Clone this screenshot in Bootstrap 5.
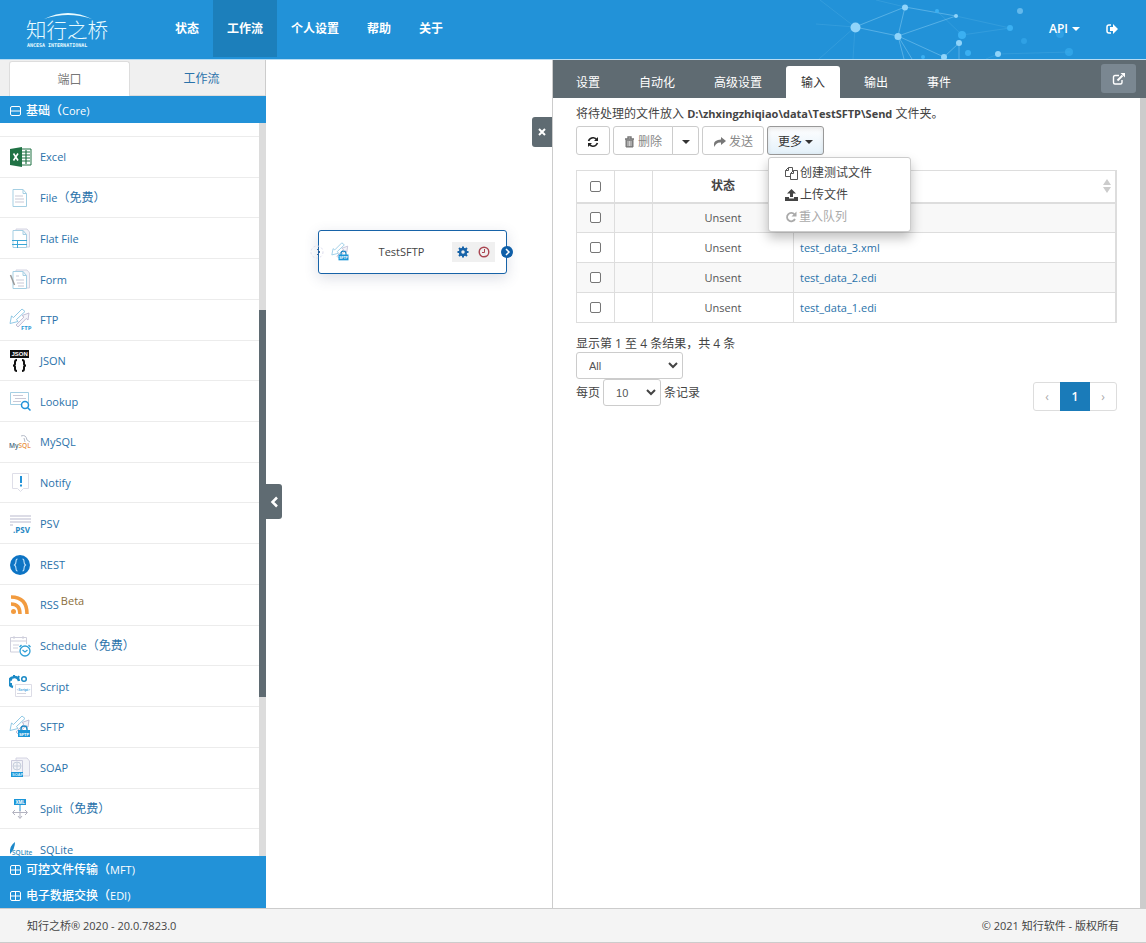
<!DOCTYPE html>
<html lang="zh-CN">
<head>
<meta charset="utf-8">
<meta name="viewport" content="width=device-width, initial-scale=1">
<title>知行之桥</title>
<link href="https://cdn.jsdelivr.net/npm/bootstrap@5.3.0/dist/css/bootstrap.min.css" rel="stylesheet">
<style>
:root{--brand:#2292d8;--brand-dark:#1c7fbb;--slate:#5f6b72;--ink:#444;--lnk:#2a72aa}
body{font-family:"Open Sans","Noto Sans CJK SC",sans-serif;font-size:12px;line-height:20px;color:var(--ink);background:#fff}
a{color:var(--lnk);text-decoration:none}
svg{flex:none}
.en{font-size:11px}
.topbar{background:var(--brand);height:60px;border-bottom:1px solid #b7dcf3}
.topbar .net{right:0;top:0}
.topbar .navbar-nav .nav-link{color:#fff;font-weight:600;padding:0 14px;height:57px;line-height:57px}
.topbar .navbar-nav .nav-link.active{background:var(--brand-dark);color:#fff}
.brandbox{width:161px;padding-left:25px}
.side{width:266px}
.side-tabs{background:#f0f0f0;height:36px;padding:1px 0 0 9px;border-right:1px solid #ccc}
.side-tabs .nav-link{border:0;border-radius:3px 3px 0 0;padding:0;height:35px;line-height:35px;color:var(--lnk);border-bottom:1px solid #ddd}
.side-tabs .nav-link.active{background:#fff;color:#777;border:1px solid #ddd;border-bottom:0}
.side-tabs li:first-child{width:121px}
.group-head{background:var(--brand);color:#fff;border:0;height:26px;padding:2px 10px 0;font-weight:500;text-align:left}
.group-head.first{height:27px;padding-top:3px}
.ports{display:grid;grid-auto-rows:1fr;height:100%;margin:13px 0 0}
.ports a{border-top:1px solid #ececec;padding:1px 0 0 9px;gap:7px;font-size:11px}
.ports a span{font-size:12px;margin-left:-7px}
.ports svg{width:24px;height:24px}
.ports sup{color:#8a6d3b;font-size:11px;top:-4px;margin-left:-5px}
.track{width:7px;background:#dcdcdc}
.thumb{background:var(--slate)}
.canvas{min-width:0}
.collapser{left:0;top:50%;width:16px;height:35px;background:var(--slate);border:0;border-radius:0 3px 3px 0}
.closer{right:0;top:57px;width:20px;height:30px;background:var(--slate);border:0;border-radius:3px 0 0 3px}
.node{left:52px;top:170px;width:189px;height:44px;border:1px solid #1763a8;border-radius:3px;background:#fff;box-shadow:0 4px 14px rgba(60,70,110,.18);padding:0 11px 0 12px}
.node .tools{background:#f0f0f0;height:20px;width:43px}
.port-in{left:-9px;top:14px}
.port-out{right:-7px;top:15px}
.panel{width:594px;border-left:1px solid #ccc}
.panel-tabs{background:var(--slate);height:38px;padding:6px 10px 0 8px;gap:9px;border-bottom:0}
.panel-tabs .nav-link{border:0;color:#fff;padding:0 15px;height:32px;line-height:33px;border-radius:3px 3px 0 0}
.panel-tabs .nav-link.active{background:#fff;color:#333}
.popout{width:35px;height:29px;background:#7a8791;border:0;border-radius:3px;margin-top:-2px}
.content{padding:6px 23px 0 23px}
.rail{width:6px;background:#ccc}
.tools-row{gap:3px;margin-top:2px}
.btn-tool{--bs-btn-color:#333;--bs-btn-bg:#fff;--bs-btn-border-color:#ccc;--bs-btn-disabled-color:#888;--bs-btn-disabled-border-color:#ccc;--bs-btn-disabled-opacity:1;height:29px;font-size:12px;line-height:20px;padding:2px 10px 0;border-radius:3px;display:inline-flex;align-items:center;gap:3px}
.btn-tool.open{border-color:#999;background:linear-gradient(#fff,#e4f1fa);box-shadow:inset 0 2px 4px rgba(0,0,0,.1)}
.btn-split{width:27px}
.caret{display:inline-block;border:4px solid transparent;border-top-color:currentColor;border-bottom:0}
.more-menu{--bs-dropdown-min-width:143px;top:100%;left:1px;margin-top:2px;padding:4px 0 3px;font-size:12px;border-radius:3px;border-color:#ccc;box-shadow:0 6px 12px rgba(0,0,0,.25)}
.more-menu .dropdown-item{display:flex;align-items:center;gap:2px;padding:0 16px;height:22px;color:#444}
.more-menu .dropdown-item:disabled{color:#aaa}
.files{--bs-table-color:#555;--bs-table-striped-bg:#f8f8f8;--bs-table-striped-color:#555;table-layout:fixed;margin:15px 0 13px;border:1px solid #ddd;border-right:2px solid #ddd}
.files td,.files th{padding:0 6px;height:30px;vertical-align:middle;border-color:#ddd}
.files td{font-size:11px}
.files thead th{height:32px;border-bottom:2px solid #ddd;color:#444}
.files .form-check-input,.files .form-check-input:checked{width:11px;height:11px;margin:0;border:1px solid #767676;border-radius:2px;display:block;margin:auto}
.sorter{margin-right:-2px}
.w-tick{width:38px}.w-state{width:141px}
.count{line-height:16px}
.pick{width:107px;height:27px;font:11px/15px "Liberation Sans",sans-serif;color:#555;padding:2px 20px 0 12px;border:1px solid #ccc;border-radius:3px;background-image:url("data:image/svg+xml,%3Csvg xmlns='http://www.w3.org/2000/svg' viewBox='0 0 10 7'%3E%3Cpath d='M1 1l4 4 4-4' fill='none' stroke='%23444' stroke-width='2'/%3E%3C/svg%3E");background-size:10px 7px;background-position:right 4px center}
.pick-sm{width:58px}
.per-page{gap:3px}
.pager .page-link{width:28px;height:29px;padding:0;line-height:27px;text-align:center;font-size:12px;color:#aaa;border-color:#ddd}
.pager .page-item:first-child .page-link{border-radius:3px 0 0 3px}
.pager .page-item:last-child .page-link{border-radius:0 3px 3px 0}
.pager .page-item.active .page-link{width:30px;background:#1a7bb9;border-color:#1a7bb9;color:#fff;font-weight:600}
.pager{margin-top:-24px}
.foot{background:#f4f4f4;border-top:1px solid #ccc;border-bottom:1px solid #ccc;height:35px;padding:0 27px;font-size:11px}
</style>
</head>
<body class="vh-100 d-flex flex-column overflow-hidden">
<svg width="0" height="0" class="position-absolute" aria-hidden="true">
<defs>
<symbol id="i-arrows" viewBox="0 0 24 24"><g fill="#fff" stroke-linejoin="round" stroke-width=".9"><path stroke="#bbb8d0" fill="#f4f4f9" d="m7 17 8-8-2-1.500 7-2.500-1 7-1.800-1.500L9 19z"/><path stroke="#85c3e2" d="m13 1 3 2.500-8.500 8L9 13.500l-8 2L2.500 8 4.500 9.500z"/></g></symbol>
<symbol id="i-sftp" viewBox="0 0 24 24"><use href="#i-arrows"/><path d="M12 16v-2a3 3 0 0 1 6 0v2" fill="none" stroke="#1c87c5" stroke-width="1.4"/><path d="M9 15h12v7H9z" fill="#1b96d8"/><text x="10" y="20.500" font-size="4" font-weight="700" fill="#fff" font-family="Liberation Sans">SFTP</text></symbol>
<symbol id="i-page" viewBox="0 0 24 24"><path d="M4 3.500h10l3.500 4v13H4zM14 3.500v4h3.500" fill="#fff" stroke="#a5cfe3"/></symbol>
<symbol id="i-back" viewBox="0 0 24 24"><path d="M7 2h11l2.500 3v15H7z" fill="#f3f3f8" stroke="#d4d4e2"/></symbol>
</defs>
</svg>

<header class="topbar navbar navbar-expand p-0 position-relative flex-shrink-0 align-items-start">
<svg class="net position-absolute" width="330" height="59" viewBox="816 0 330 59" aria-hidden="true">
<g stroke="#8fd0f5" stroke-width=".8" fill="none"><path opacity=".6" d="M855 27 905 7l-7 29zM898 36l58-20-51-9M898 36l46 21 15-14v16M898 36l6 23M898 36l14 23"/><path opacity=".2" d="M855 27 820 0M855 27l-39-3M855 27l-36 32M855 27l-2 32M905 7 876 0M956 16l54 12-48 7-25-24M998 54l72-2M998 54l-12 5"/></g>
<g fill="#90d4fa"><circle cx="855.500" cy="27.500" r="5"/><circle cx="905" cy="7.500" r="3"/><circle cx="898" cy="36.500" r="3.500"/><circle cx="956" cy="16" r="2"/><circle cx="959" cy="43" r="3"/><circle cx="944" cy="57" r="3"/><circle cx="998" cy="54" r="3"/><circle cx="1020" cy="11" r="3" opacity=".6"/></g>
<g fill="#3bb0f2"><circle cx="962" cy="35" r="4"/><circle cx="968" cy="53" r="3"/><circle cx="1010" cy="28" r="3"/><circle cx="1024" cy="41" r="3" opacity=".5"/><circle cx="1069" cy="52" r="4" opacity=".6"/><circle cx="1060" cy="34" r="4" opacity=".5"/><circle cx="937" cy="11" r="2"/><circle cx="923" cy="57" r="2"/></g>
</svg>
<a class="brandbox" href="#" aria-label="知行之桥">
<svg width="86" height="59" viewBox="0 0 86 59" fill="#e9fbff"><path d="M19 19q24-12 48 0-24-8-48 0z"/><text x="1" y="38" font-size="20.500" font-weight="300" font-family="Noto Sans CJK SC">知行之桥</text><text x="2" y="47" font-size="5" font-weight="700" font-family="DejaVu Sans Mono">ANCESA INTERNATIONAL</text></svg></a>
<ul class="navbar-nav me-auto">
<li class="nav-item"><a class="nav-link" href="#">状态</a></li>
<li class="nav-item"><a class="nav-link active" href="#">工作流</a></li>
<li class="nav-item"><a class="nav-link" href="#">个人设置</a></li>
<li class="nav-item"><a class="nav-link" href="#">帮助</a></li>
<li class="nav-item"><a class="nav-link" href="#">关于</a></li>
</ul>
<ul class="navbar-nav position-relative me-3">
<li class="nav-item"><a class="nav-link d-flex align-items-center gap-1" href="#">API <span class="caret"></span></a></li>
<li class="nav-item"><a class="nav-link d-flex align-items-center px-2 mx-1" href="#" aria-label="退出"><svg width="12" height="12" viewBox="0 0 12 12"><path d="M5 2H3Q1 2 1 4v4q0 2 2 2h2" fill="none" stroke="#fff" stroke-width="1.500"/><path d="M4 4h3V1l5 5-5 5V8H4z" fill="#fff"/></svg></a></li>
</ul>
</header>

<main class="d-flex flex-fill overflow-hidden">
<aside class="side d-flex flex-column flex-shrink-0">
<ul class="nav side-tabs flex-nowrap">
<li class="nav-item text-center"><a class="nav-link active" href="#">端口</a></li>
<li class="nav-item text-center flex-fill"><a class="nav-link ps-2" href="#">工作流</a></li>
</ul>
<button class="group-head first d-flex align-items-center gap-1" type="button"><svg width="12" height="12" viewBox="0 0 12 12" fill="none" stroke="#fff"><rect x=".5" y="1.500" width="10" height="9" rx="1.500"/><path d="M1 6h10"/></svg><span>基础（<span class="en">Core)</span></span></button>
<div class="d-flex flex-fill overflow-hidden">
<nav class="flex-fill overflow-hidden h-100"><div class="ports">
<a class="d-flex align-items-center" href="#"><svg viewBox="0 0 24 24"><path d="M12 4h10v16H12z" fill="#fff" stroke="#207245"/><path d="M13 7h8M13 10h8M13 13h8M13 16h8M17 5v14" stroke="#207245" stroke-width="1.200"/><path d="M1 4l12-2v20L1 20z" fill="#207245"/><path d="m4.500 8.500 4.500 7M9 8.500l-4.500 7" stroke="#fff" stroke-width="1.600"/></svg>Excel</a>
<a class="d-flex align-items-center" href="#"><svg viewBox="0 0 24 24"><use href="#i-page"/><path d="M6 10h8M6 13h9M6 16h9" stroke="#c9c9d6"/></svg>File<span>（免费）</span></a>
<a class="d-flex align-items-center" href="#"><svg viewBox="0 0 24 24"><use href="#i-back"/><use href="#i-page"/><path d="M3 13.500h15M3 17.500h15M8.500 13v8" stroke="#3ba6d6"/></svg>Flat File</a>
<a class="d-flex align-items-center" href="#"><svg viewBox="0 0 24 24"><use href="#i-back"/><use href="#i-page"/><path d="M7 8h3M7 12h8M8 15h7M9 18h6" stroke="#c9c9d6"/><path d="m1.500 7 4 10" stroke="#999" stroke-width="1.500"/></svg>Form</a>
<a class="d-flex align-items-center" href="#"><svg viewBox="0 0 24 24"><use href="#i-arrows"/><text x="12" y="22" font-size="6" font-weight="700" fill="#2d9bd6" font-family="Open Sans">FTP</text></svg>FTP</a>
<a class="d-flex align-items-center" href="#"><svg viewBox="0 0 24 24"><path d="M1 1h19v8H1z" fill="#111"/><text x="2.500" y="7.200" font-size="6" font-weight="700" fill="#fff" font-family="Liberation Sans">JSON</text><path d="M8 11q-2 0-2 2v2q0 1.500-2 1.500 2 0 2 1.500v2q0 2 2 2M13 11q2 0 2 2v2q0 1.500 2 1.500-2 0-2 1.500v2q0 2-2 2" fill="none" stroke="#111" stroke-width="2"/></svg>JSON</a>
<a class="d-flex align-items-center" href="#"><svg viewBox="0 0 24 24"><path d="M1.500 2.500h18v12h-18z" fill="#fff" stroke="#a5cfe3"/><path d="M4 5.500h10M6 8.500h11M4 11.500h8" stroke="#c9c9d6"/><circle cx="16" cy="15" r="3.500" fill="#fff" stroke="#2292d8" stroke-width="1.500"/><path d="m18.500 17.500 3 3" stroke="#2292d8" stroke-width="1.500"/></svg>Lookup</a>
<a class="d-flex align-items-center" href="#"><svg viewBox="0 0 24 24"><path d="M12 6q5-2 6 4l3 2M15 8l1 4" fill="none" stroke="#b5bcc9"/><text x="0" y="18" font-size="6.500" font-weight="600" fill="#44657c" font-family="Open Sans">My<tspan fill="#e99145">SQL</tspan></text></svg>MySQL</a>
<a class="d-flex align-items-center" href="#"><svg viewBox="0 0 24 24"><path d="M3.500 2.500h16v15h-5l-3 3-3-3h-5z" fill="#fff" stroke="#dedee8"/><path d="M12 5v7M12 13.500v2" stroke="#2292d8" stroke-width="2"/></svg>Notify</a>
<a class="d-flex align-items-center" href="#"><svg viewBox="0 0 24 24"><path d="M1 4h21M1 7h21M1 10h21M1 13h3" stroke="#dcdce6" stroke-width="2"/><text x="4" y="21" font-size="8" font-weight="700" fill="#2688c4" font-family="Open Sans">.PSV</text></svg>PSV</a>
<a class="d-flex align-items-center" href="#"><svg viewBox="0 0 24 24"><circle cx="11" cy="12" r="10" fill="#0d74c4"/><path d="M8.500 6Q7 6 7 8.500T5.500 12Q7 13 7 15.500T8.500 18M13.500 6q1.500 0 1.500 2.500t1.500 3.500q-1.500 1-1.500 3.500T13.500 18" fill="none" stroke="#bfe0fa" stroke-width="1.100"/></svg>REST</a>
<a class="d-flex align-items-center" href="#"><svg viewBox="0 0 24 24" fill="none" stroke="#f29b3f" stroke-width="3.500"><path d="M2 11q9 0 9 10M2 4q16 0 16 17"/><circle cx="4.500" cy="18.500" r="2.500" fill="#f29b3f" stroke="none"/></svg>RSS <sup>Beta</sup></a>
<a class="d-flex align-items-center" href="#"><svg viewBox="0 0 24 24"><path d="M10 18H1.500V3.500h16V10M1.500 7h16M5 2v3M14 2v3M4 11h6M4 14h5" fill="none" stroke="#cfcfdc"/><circle cx="16" cy="17" r="5" fill="#fff" stroke="#2f9fd6" stroke-width="1.300"/><path d="m13.500 16 2.500 2 2.500-2M10.500 13l2-2M19.500 11l2 2" fill="none" stroke="#2f9fd6" stroke-width="1.300"/></svg>Schedule<span>（免费）</span></a>
<a class="d-flex align-items-center" href="#"><svg viewBox="0 0 24 24"><path d="M4 12a5 5 0 1 1 6-6" fill="none" stroke="#1b8ac6" stroke-width="2.500"/><path d="M1 4l2 1M5 0v3M10 1 9 3M0 9h3" stroke="#1b8ac6" stroke-width="2"/><circle cx="15" cy="4" r="2.300" fill="none" stroke="#1b8ac6" stroke-width="1.500"/><path d="M6.500 9.500h16v12h-16z" fill="#fff" stroke="#dcdce6"/><text x="7.500" y="16" font-size="3.500" font-weight="600" fill="#2292d8" font-family="Open Sans">&lt;Script&gt;</text><path d="M8 18.500h9" stroke="#d5d5df"/></svg>Script</a>
<a class="d-flex align-items-center" href="#"><svg viewBox="0 0 24 24"><use href="#i-sftp"/></svg>SFTP</a>
<a class="d-flex align-items-center" href="#"><svg viewBox="0 0 24 24"><use href="#i-back"/><path d="M2.500 4.500h11v16h-11z" fill="#f3f3f8" stroke="#ccd"/><circle cx="8" cy="10" r="4" fill="none" stroke="#c6cfdc"/><path d="M4 10h8M8 6v8" stroke="#c6cfdc"/><path d="M2 16h12v5H2z" fill="#1b96d8"/><text x="3" y="20" font-size="4" font-weight="700" fill="#cef" font-family="Liberation Sans">SOAP</text></svg>SOAP</a>
<a class="d-flex align-items-center" href="#"><svg viewBox="0 0 24 24"><path d="M5 2h12v6H5z" fill="#1b96d8"/><text x="6.500" y="7" font-size="4.500" font-weight="700" fill="#fff" font-family="Liberation Sans">XML</text><path d="M11 8v6" stroke="#1b96d8"/><path d="M11 13v8M4 15.500h14M6 13l-2.500 2.500L6 18M16 13l2.500 2.500L16 18M9 19l2 2.500 2-2.500" fill="none" stroke="#b3b3c0"/></svg>Split<span>（免费）</span></a>
<a class="d-flex align-items-center" href="#"><svg viewBox="0 0 24 24"><path d="M1 16Q0 8 6 4q0 7-5 12z" fill="#1b87c9"/><text x="3" y="17" font-size="6.500" font-weight="600" fill="#3a8fbd" font-family="Open Sans">SQLite</text></svg>SQLite</a>
</div></nav>
<div class="track d-flex flex-column flex-shrink-0"><div style="flex:187"></div><div class="thumb" style="flex:387"></div><div style="flex:159"></div></div>
</div>
<button class="group-head d-flex align-items-center gap-1" type="button"><svg width="12" height="12" viewBox="0 0 12 12" fill="none" stroke="#fff"><rect x=".5" y="1.500" width="10" height="9" rx="1.500"/><path d="M1 6h10M5.500 1v10"/></svg><span>可控文件传输（<span class="en">MFT)</span></span></button>
<button class="group-head d-flex align-items-center gap-1" type="button"><svg width="12" height="12" viewBox="0 0 12 12" fill="none" stroke="#fff"><rect x=".5" y="1.500" width="10" height="9" rx="1.500"/><path d="M1 6h10M5.500 1v10"/></svg><span>电子数据交换（<span class="en">EDI)</span></span></button>
</aside>

<section class="canvas flex-fill position-relative">
<button class="collapser position-absolute p-0 d-flex align-items-center justify-content-center" type="button" aria-label="收起"><svg width="8" height="12" viewBox="0 0 8 12"><path d="M7 1.500 2.500 6 7 10.500" fill="none" stroke="#fff" stroke-width="2.500"/></svg></button>
<button class="closer position-absolute p-0 d-flex align-items-center justify-content-center" type="button" aria-label="关闭"><svg width="8" height="8" viewBox="0 0 8 8"><path d="m1 1 6 6M7 1 1 7" stroke="#fff" stroke-width="2"/></svg></button>
<div class="node position-absolute d-flex align-items-center">
<svg class="port-in position-absolute" width="14" height="14" viewBox="0 0 14 14" fill="none"><circle cx="7" cy="7" r="6" stroke="#dde" stroke-dasharray="2 2"/><path d="m7 4 3 3-3 3" stroke="#456a9c"/></svg>
<svg width="20" height="20"><use href="#i-sftp"/></svg>
<span class="en flex-fill text-center">TestSFTP</span>
<span class="tools d-flex align-items-center justify-content-around">
<svg width="12" height="12" viewBox="0 0 12 12"><circle cx="6" cy="6" r="3" fill="none" stroke="#1763a8" stroke-width="2.500"/><path d="M6 .5v2M6 9.500v2M.5 6h2M9.500 6h2M2 2l1.500 1.500M8.500 8.500 10 10M10 2 8.500 3.500M3.500 8.500 2 10" stroke="#1763a8" stroke-width="2"/></svg>
<svg width="12" height="12" viewBox="0 0 12 12" fill="none" stroke="#a94450"><circle cx="6" cy="6" r="4.800" stroke-width="1.400"/><path d="M6.500 3v3.500H4"/></svg></span>
<svg class="port-out position-absolute" width="12" height="12" viewBox="0 0 12 12"><circle cx="6" cy="6" r="6" fill="#0f5fa8"/><path d="m5 3 3 3-3 3" fill="none" stroke="#fff" stroke-width="1.500"/></svg>
</div>
</section>

<section class="panel d-flex flex-column flex-shrink-0">
<ul class="nav nav-tabs panel-tabs flex-nowrap">
<li class="nav-item"><a class="nav-link" href="#">设置</a></li>
<li class="nav-item"><a class="nav-link" href="#">自动化</a></li>
<li class="nav-item"><a class="nav-link" href="#">高级设置</a></li>
<li class="nav-item"><a class="nav-link active" href="#">输入</a></li>
<li class="nav-item"><a class="nav-link" href="#">输出</a></li>
<li class="nav-item me-auto"><a class="nav-link" href="#">事件</a></li>
<li><button class="popout d-flex align-items-center justify-content-center p-0" type="button" aria-label="新窗口"><svg width="14" height="14" viewBox="0 0 14 14" fill="none" stroke="#fff" stroke-width="1.400"><path d="M7 3.500H3q-1.500 0-1.500 1.500v5.500Q1.500 12 3 12h5.500q1.500 0 1.500-1.500V8"/><path d="m5.500 8.500 5-5" stroke-width="2"/><path d="M8.500 1H13v4.500z" fill="#fff" stroke="none"/></svg></button></li>
</ul>
<div class="d-flex flex-fill overflow-hidden">
<div class="content flex-fill">
<div>将待处理的文件放入 <b class="en">D:\zhxingzhiqiao\data\TestSFTP\Send</b> 文件夹。</div>
<div class="tools-row d-flex">
<button class="btn btn-tool" type="button" aria-label="刷新"><svg width="12" height="12" viewBox="0 0 12 12"><path d="M1.500 5Q3 1.500 6.500 1.800 8.500 2 10 4M10.500 7Q9 10.500 5.500 10.200 3.500 10 2 8" fill="none" stroke="#222" stroke-width="1.600"/><path d="M11 1v4H7zM1 11V7h4z" fill="#222"/></svg></button>
<div class="btn-group">
<button class="btn btn-tool" type="button" disabled><svg width="11" height="12" viewBox="0 0 11 12" fill="none" stroke="#777"><path d="M1 3h9M4 3V1h3v2" stroke-width="1.400"/><path d="M2 3v8h7V3" fill="#888"/><path d="M4 5v5M5.500 5v5M7 5v5" stroke="#fff" stroke-width=".6"/></svg>删除</button>
<button class="btn btn-tool btn-split px-0 justify-content-center" type="button" aria-label="更多删除选项"><span class="caret"></span></button>
</div>
<button class="btn btn-tool" type="button" disabled><svg width="13" height="12" viewBox="0 0 13 12"><path d="M8 1l5 4-5 4V6.500Q3 6 1.500 11-1 4 8 3.500z" fill="#777"/></svg>发送</button>
<div class="dropdown">
<button class="btn btn-tool open" type="button" aria-expanded="true">更多<span class="caret"></span></button>
<div class="dropdown-menu more-menu show">
<button class="dropdown-item" type="button"><svg width="13" height="13" viewBox="0 0 13 13" fill="#fff" stroke="#555"><path d="M3.500.5h4v9h-7v-6zM3.500.5v3h-3"/><path d="M8.500 3.500h4v9h-7v-6zM8.500 3.500v3h-3"/></svg>创建测试文件</button>
<button class="dropdown-item" type="button"><svg width="13" height="12" viewBox="0 0 13 12" fill="#444"><path d="M6.500 0 11 4.500H8V8H5V4.500H2zM0 8h4v1.500h5V8h4v4H0z"/></svg>上传文件</button>
<button class="dropdown-item" type="button" disabled><svg width="12" height="12" viewBox="0 0 12 12"><path d="M9.500 3.500A4.200 4.200 0 1 0 10 8" fill="none" stroke="#aaa" stroke-width="1.800"/><path d="M11.500.5v5h-5z" fill="#aaa"/></svg>重入队列</button>
</div></div>
</div>
<table class="table table-bordered table-striped files">
<colgroup><col class="w-tick"><col class="w-tick"><col class="w-state"><col></colgroup>
<thead><tr><th><input class="form-check-input" type="checkbox" aria-label="全选"></th><th></th><th class="text-center">状态</th><th><svg class="sorter d-block ms-auto" width="8" height="14" viewBox="0 0 8 14" fill="#ccc"><path d="m4 0 4 6H0zM4 14l4-6H0z"/></svg></th></tr></thead>
<tbody>
<tr><td><input class="form-check-input" type="checkbox" aria-label="选择"></td><td></td><td class="text-center">Unsent</td><td></td></tr>
<tr><td><input class="form-check-input" type="checkbox" aria-label="选择"></td><td></td><td class="text-center">Unsent</td><td><a href="#">test_data_3.xml</a></td></tr>
<tr><td><input class="form-check-input" type="checkbox" aria-label="选择"></td><td></td><td class="text-center">Unsent</td><td><a href="#">test_data_2.edi</a></td></tr>
<tr><td><input class="form-check-input" type="checkbox" aria-label="选择"></td><td></td><td class="text-center">Unsent</td><td><a href="#">test_data_1.edi</a></td></tr>
</tbody></table>
<div class="count">显示第 1 至 4 条结果，共 4 条</div>
<select class="form-select pick" aria-label="筛选"><option>All</option></select>
<label class="per-page d-flex align-items-center">每页 <select class="form-select pick pick-sm"><option>10</option></select> 条记录</label>
<ul class="pagination pager justify-content-end mb-0">
<li class="page-item"><a class="page-link" href="#">‹</a></li>
<li class="page-item active"><a class="page-link" href="#">1</a></li>
<li class="page-item"><a class="page-link" href="#">›</a></li>
</ul>
</div>
<div class="rail flex-shrink-0"></div>
</div>
</section>
</main>
<footer class="foot d-flex justify-content-between align-items-center flex-shrink-0"><span>知行之桥® 2020 - 20.0.7823.0</span><span>© 2021 知行软件 - 版权所有</span></footer>
<script src="https://cdn.jsdelivr.net/npm/bootstrap@5.3.0/dist/js/bootstrap.bundle.min.js"></script>
</body>
</html>
